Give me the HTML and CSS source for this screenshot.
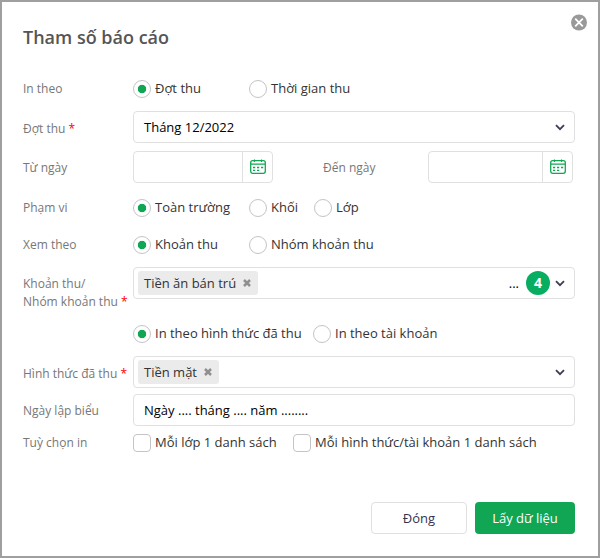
FILE: index.html
```html
<!DOCTYPE html>
<html lang="vi">
<head>
    <meta charset="UTF-8">
    <meta name="viewport" content="width=device-width, initial-scale=1.0">
    <title>Tham số báo cáo</title>
    <link rel="stylesheet" href="styles.css">
</head>
<body>
    <svg class="sprite" aria-hidden="true">
        <symbol id="calendar" viewBox="0 0 16 16">
            <rect x="0.7" y="1.7" width="14.6" height="12.6" rx="2" fill="none" stroke="#11a653" stroke-width="1.3"/>
            <path d="M1 5.2h14M4.5 0.5v2.6M11.5 0.5v2.6" fill="none" stroke="#11a653" stroke-width="1.2"/>
            <path d="M3 8.5h2.2M7 8.5h2.2M11 8.5h2.2M3 11.3h2.2M7 11.3h2.2" fill="none" stroke="#11a653" stroke-width="1.3"/>
        </symbol>
        <symbol id="chevron" viewBox="0 0 10 7">
            <path d="M1 1.2l4 4 4-4" fill="none" stroke="#3f3d56" stroke-width="1.8"/>
        </symbol>
        <symbol id="cross" viewBox="0 0 8 8">
            <path d="M1 1l6 6M7 1l-6 6" fill="none" stroke="#8f8f8f" stroke-width="2.5"/>
        </symbol>
    </svg>

    <div class="dialog">
        <button class="close" type="button" aria-label="Đóng">
            <svg viewBox="0 0 16 16"><circle cx="8" cy="8" r="8" fill="#999"/><path d="M4.2 4.2l7.6 7.6M11.8 4.2l-7.6 7.6" stroke="#fff" stroke-width="1.8"/></svg>
        </button>
        <h1>Tham số báo cáo</h1>

        <div class="row print-by">
            <span class="label">In theo</span>
            <div class="options">
                <label class="option wide"><input type="radio" name="printBy" checked>Đợt thu</label>
                <label class="option"><input type="radio" name="printBy">Thời gian thu</label>
            </div>
        </div>

        <div class="row period">
            <span class="label low">Đợt thu <b>*</b></span>
            <div class="field">
                <span class="value">Tháng 12/2022</span>
                <svg class="chevron"><use href="#chevron"/></svg>
            </div>
        </div>

        <div class="row dates">
            <span class="label mid">Từ ngày</span>
            <div class="date"><span class="date-btn"><svg><use href="#calendar"/></svg></span></div>
            <span class="label mid to">Đến ngày</span>
            <div class="date date-to"><span class="date-btn"><svg><use href="#calendar"/></svg></span></div>
        </div>

        <div class="row scope">
            <span class="label">Phạm vi</span>
            <div class="options">
                <label class="option wide"><input type="radio" name="scope" checked>Toàn trường</label>
                <label class="option block"><input type="radio" name="scope">Khối</label>
                <label class="option"><input type="radio" name="scope">Lớp</label>
            </div>
        </div>

        <div class="row view-by">
            <span class="label">Xem theo</span>
            <div class="options">
                <label class="option wide"><input type="radio" name="viewBy" checked>Khoản thu</label>
                <label class="option"><input type="radio" name="viewBy">Nhóm khoản thu</label>
            </div>
        </div>

        <div class="row fees">
            <span class="label two-lines">Khoản thu/<br>Nhóm khoản thu <b>*</b></span>
            <div class="field tags">
                <span class="tag fee-tag">Tiền ăn bán trú<svg><use href="#cross"/></svg></span>
                <span class="more">...</span>
                <span class="count">4</span>
                <svg class="chevron"><use href="#chevron"/></svg>
            </div>
        </div>

        <div class="row method-by">
            <span class="label"></span>
            <div class="options">
                <label class="option method"><input type="radio" name="methodBy" checked>In theo hình thức đã thu</label>
                <label class="option"><input type="radio" name="methodBy">In theo tài khoản</label>
            </div>
        </div>

        <div class="row methods">
            <span class="label low">Hình thức đã thu <b>*</b></span>
            <div class="field tags">
                <span class="tag method-tag">Tiền mặt<svg><use href="#cross"/></svg></span>
                <svg class="chevron"><use href="#chevron"/></svg>
            </div>
        </div>

        <div class="row made-on">
            <span class="label mid">Ngày lập biểu</span>
            <div class="field">
                <span class="value">Ngày .... tháng .... năm ........</span>
            </div>
        </div>

        <div class="row extras">
            <span class="label">Tuỳ chọn in</span>
            <div class="options">
                <label class="option per-class"><input type="checkbox">Mỗi lớp 1 danh sách</label>
                <label class="option"><input type="checkbox">Mỗi hình thức/tài khoản 1 danh sách</label>
            </div>
        </div>

        <div class="actions">
            <button class="btn cancel" type="button">Đóng</button>
            <button class="btn submit" type="button">Lấy dữ liệu</button>
        </div>
    </div>
</body>
</html>
```
FILE: styles.css
```css
* {
    margin: 0;
    padding: 0;
    box-sizing: border-box;
}

body {
    background: #fff;
    font-family: 'Open Sans', 'Noto Sans', sans-serif;
    font-size: 13px;
    color: #333;
}

button {
    font-family: inherit;
    font-size: 13px;
    cursor: pointer;
}

.sprite {
    display: none;
}

.dialog {
    position: relative;
    height: 558px;
    padding: 22px 23px 0 21px;
    border: 2px solid #9f9f9f;
    background: #fff;
}

.close {
    position: absolute;
    top: 12px;
    right: 11px;
    width: 16px;
    height: 17px;
    border: none;
    background: none;
}

.close svg {
    display: block;
    width: 16px;
    height: 17px;
}

h1 {
    height: 26px;
    line-height: 26px;
    font-size: 18px;
    font-weight: 600;
    color: #555;
}

.row {
    display: flex;
    align-items: center;
    height: 32px;
}

.label {
    flex: none;
    width: 110px;
    font-size: 12px;
    line-height: 18px;
    color: #777;
    white-space: nowrap;
}

.label b {
    font-weight: 400;
    color: #f00;
}

.label.mid {
    padding-top: 2px;
}

.label.low {
    padding-top: 4px;
}

.label.two-lines {
    align-self: flex-start;
    padding-top: 8px;
}

/* radio and checkbox rows */
.print-by, .scope, .view-by, .method-by, .extras {
    height: 18px;
}

.print-by { margin-top: 30px; }
.period { margin-top: 13px; }
.dates { margin-top: 8px; }
.scope { margin-top: 16px; }
.view-by { margin-top: 19px; }
.fees { margin-top: 13px; }
.method-by { margin-top: 26px; }
.methods { margin-top: 13px; }
.made-on { margin-top: 6px; }
.extras { margin-top: 8px; }

.options {
    display: flex;
}

.option {
    display: flex;
    align-items: center;
    gap: 4px;
    height: 18px;
    line-height: 16px;
    align-items: flex-start;
    white-space: nowrap;
}

.option.wide { width: 116px; }
.option.block { width: 65px; }
.option.method { width: 180px; }
.option.per-class { width: 160px; }

.option input {
    appearance: none;
    width: 18px;
    height: 18px;
    border: 1px solid #c4c4c4;
    border-radius: 4px;
    background: #fff;
}

.option input[type="radio"] {
    border-radius: 50%;
}

.option input[type="radio"]:checked {
    background: radial-gradient(circle, #11a653 3.8px, #fff 4.6px);
}

.field {
    flex: 1;
    display: flex;
    align-items: center;
    height: 32px;
    padding: 0 9px 0 10px;
    border: 1px solid #e0e0e0;
    border-radius: 4px;
}

.value {
    color: #000;
}

.chevron {
    width: 10px;
    height: 7px;
    margin-left: auto;
}

.field.tags {
    padding-left: 4px;
}

.tag {
    display: flex;
    align-items: center;
    justify-content: space-between;
    height: 24px;
    padding: 0 7px 0 6px;
    border-radius: 3px;
    background: #ebebeb;
}

.tag svg {
    width: 8px;
    height: 8px;
}

.fee-tag { width: 120px; }
.method-tag { width: 81px; }

.more {
    margin-left: auto;
    margin-right: 7px;
    color: #000;
}

.count {
    width: 24px;
    height: 24px;
    margin-right: 5px;
    border-radius: 50%;
    background: #07ae62;
    color: #fff;
    font-size: 14px;
    font-weight: 700;
    line-height: 24px;
    text-align: center;
}

.count + .chevron {
    margin-left: 0;
}

.date {
    display: flex;
    justify-content: flex-end;
    width: 140px;
    height: 32px;
    border: 1px solid #e0e0e0;
    border-radius: 4px;
}

.date-to {
    width: 145px;
}

.date-btn {
    display: flex;
    align-items: center;
    justify-content: center;
    width: 30px;
    border-left: 1px solid #e0e0e0;
}

.date-btn svg {
    width: 16px;
    height: 16px;
}

.label.to {
    width: 105px;
    margin-left: 50px;
}

.actions {
    display: flex;
    justify-content: flex-end;
    gap: 8px;
    margin-top: 50px;
}

.btn {
    height: 32px;
    border-radius: 4px;
}

.cancel {
    width: 96px;
    border: 1px solid #e0e0e0;
    background: #fff;
    color: #33334d;
}

.submit {
    width: 100px;
    border: none;
    background: #11a653;
    color: #fff;
    font-weight: 500;
}
```
